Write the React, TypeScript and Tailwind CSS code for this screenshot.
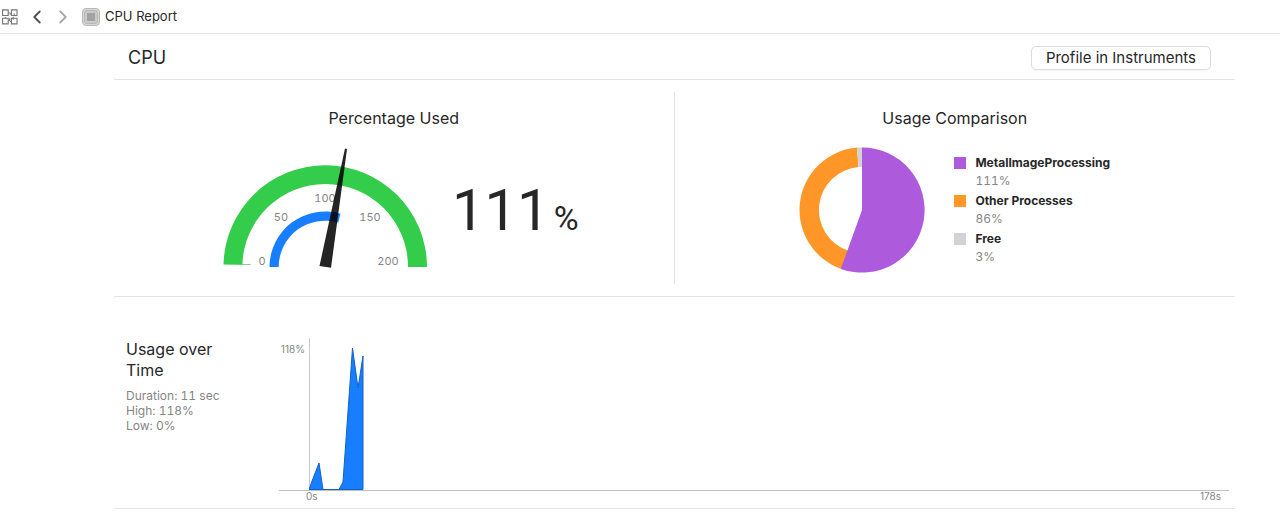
import { ChevronLeft, ChevronRight } from 'lucide-react';

interface LegendItemProps {
  color: string;
  name: string;
  value: number;
}

const LegendItem = ({ color, name, value }: LegendItemProps) => {
  return (
    <li className="flex gap-[9px]">
      <span className={`mt-[3px] size-3 ${color}`} />
      <div>
        <p className="text-[12px] leading-[18px] font-bold">{name}</p>
        <p className="text-[12px] leading-[18px] text-[#858585] tabular-nums">{value}%</p>
      </div>
    </li>
  );
};

const RelatedItemsIcon = () => (
  <svg
    width="16"
    height="16"
    viewBox="0 0 16 16"
    fill="none"
    stroke="#757575"
    strokeWidth="1.1"
  >
    <path d="M.6 .9h5.600v5.600H.6zM9.400 .9H15v5.600H9.400zM.6 9.300h5.600v5.600H.6zM9.400 9.300H15v5.600H9.400z" />
    <path d="M6.200 3.700h1.600M9.400 4.900H7.700M12.200 4.500v2M3.400 9.300V7.900M6.200 11.500h1.500V9.300M11.200 10.800V7.900M9.400 12.500H8" />
  </svg>
);

const Gauge = () => (
  <svg
    className="h-[122px] w-[206px] shrink-0 tabular-nums"
    viewBox="222 147 206 122"
    fontFamily="Inter, sans-serif"
    fontSize="11"
    fill="#858585"
  >
    <path
      d="M223.500 264.500A101.600 101.600 0 0 1 325.300 165.300A101.700 101.700 0 0 1 427 267H408A82.700 82.700 0 0 0 325.300 184A83 83 0 0 0 242.400 264.200L250.500 264.300V265Z"
      fill="#34cc4b"
    />
    <path
      d="M269.500 267A55.500 55.500 0 0 1 340.500 213.700L338.200 222.600A46.300 46.300 0 0 0 278.700 267Z"
      fill="#167eff"
    />
    <text x="262" y="265" textAnchor="middle">0</text>
    <text x="281" y="221" textAnchor="middle">50</text>
    <text x="325" y="202" textAnchor="middle">100</text>
    <text x="370" y="221" textAnchor="middle">150</text>
    <text x="388" y="265" textAnchor="middle">200</text>
    <path d="M345 148.500L347 149L331 267.800L319.500 266Z" fill="#000" fillOpacity=".86" />
  </svg>
);

const UsagePie = () => (
  <svg className="size-[126px] shrink-0" viewBox="-63 -63 126 126">
    <path
      d="M-20.500 59.100A62.600 62.600 0 0 1 -5 -62.400L-3.500 -42.900A43 43 0 0 0 -14.100 40.600Z"
      fill="#fe9727"
    />
    <path d="M-5 -62.400A62.600 62.600 0 0 1 0 -62.600V-43A43 43 0 0 0 -3.500 -42.900Z" fill="#d3d3d5" />
    <path d="M0 0V-62.600A62.600 62.600 0 1 1 -21.200 58.900Z" fill="#ae5adc" />
  </svg>
);

const UsageChart = () => {
  return (
    <div className="min-w-0 flex-1">
      <div className="flex border-b border-[#bdbdbd]">
        <span className="w-[30px] pt-[5px] pr-1 text-right text-[10px] leading-3 text-[#858585]">
          118%
        </span>
        <div className="flex h-[152px] flex-1 items-end border-l border-[#c8c8c8]">
          <svg className="-ml-px h-[144px] w-[56px]" viewBox="0 0 56 144">
            <path
              d="M0 143.500L4 132.500L10 117L14 143.500H30L34 136L43.500 2L49 42L54 10V143.500Z"
              fill="#167eff"
              stroke="#1163c4"
            />
          </svg>
        </div>
      </div>
      <div className="flex justify-between pr-2 pl-[27px] text-[10px] leading-[10px] text-[#858585]">
        <span>0s</span>
        <span>178s</span>
      </div>
    </div>
  );
};

const App = () => {
  return (
    <div className="bg-white font-['Inter',sans-serif] text-[#272727]">
      <header className="flex h-[34px] items-center border-b border-[#e6e6e6] pl-[2px]">
        <button aria-label="Related items">
          <RelatedItemsIcon />
        </button>
        <button aria-label="Back" className="ml-2 text-[#505050]">
          <ChevronLeft size={22} strokeWidth={2} />
        </button>
        <button aria-label="Forward" className="ml-1 text-[#a8a8a8]">
          <ChevronRight size={22} strokeWidth={2} />
        </button>
        <svg className="ml-2" width="18" height="18" viewBox="0 0 18 18">
          <rect x=".5" y=".5" width="17" height="17" rx="3.500" fill="#d8d8d8" stroke="#b8b8b8" />
          <rect x="2.500" y="2.500" width="13" height="13" rx="2.500" fill="#cacaca" stroke="#b8b8b8" />
          <rect x="5" y="5" width="8" height="8" fill="#a2a2a2" />
        </svg>
        <span className="ml-[5px] text-[13px]">CPU Report</span>
      </header>

      <main className="mr-[45px] ml-[114px]">
        <div className="flex h-[46px] items-center justify-between border-b border-[#e4e4e4] pt-[2px] pr-6 pl-[14px]">
          <h1 className="text-[18px]">CPU</h1>
          <button className="h-6 rounded-[5px] border border-[#dcdcdc] px-[14px] text-[15px] leading-[22px] shadow-xs">
            Profile in Instruments
          </button>
        </div>

        <div className="grid grid-cols-2 border-b border-[#e4e4e4] py-3">
          <section className="h-48 border-r border-[#e4e4e4] pt-[14px]">
            <h2 className="text-center text-[16px] leading-6">Percentage Used</h2>
            <div className="mt-[17px] flex justify-center gap-6 pl-[13px]">
              <Gauge />
              <p className="flex items-baseline pt-[28px] font-['Roboto',sans-serif] text-[58px] leading-[70px]">
                111
                <span className="ml-1 text-[34px]">%</span>
              </p>
            </div>
          </section>
          <section className="pt-[14px]">
            <h2 className="text-center text-[16px] leading-6">Usage Comparison</h2>
            <div className="mt-[17px] flex justify-center gap-[29px]">
              <UsagePie />
              <ul className="flex flex-col gap-[2px] pt-[7px]">
                <LegendItem color="bg-[#ae5adc]" name="MetalImageProcessing" value={111} />
                <LegendItem color="bg-[#fe9727]" name="Other Processes" value={86} />
                <LegendItem color="bg-[#d3d3d5]" name="Free" value={3} />
              </ul>
            </div>
          </section>
        </div>

        <section className="flex border-b border-[#e4e4e4] pt-[41px] pr-[6px] pb-[7px] pl-3">
          <div className="w-[153px] shrink-0 pt-px">
            <h2 className="w-[100px] text-[16px] leading-[21px]">Usage over Time</h2>
            <div className="mt-[7px] text-[12px] leading-[15px] text-[#858585] tabular-nums">
              <p>Duration: 11 sec</p>
              <p>High: 118%</p>
              <p>Low: 0%</p>
            </div>
          </div>
          <UsageChart />
        </section>
      </main>
    </div>
  );
};

export default App;
